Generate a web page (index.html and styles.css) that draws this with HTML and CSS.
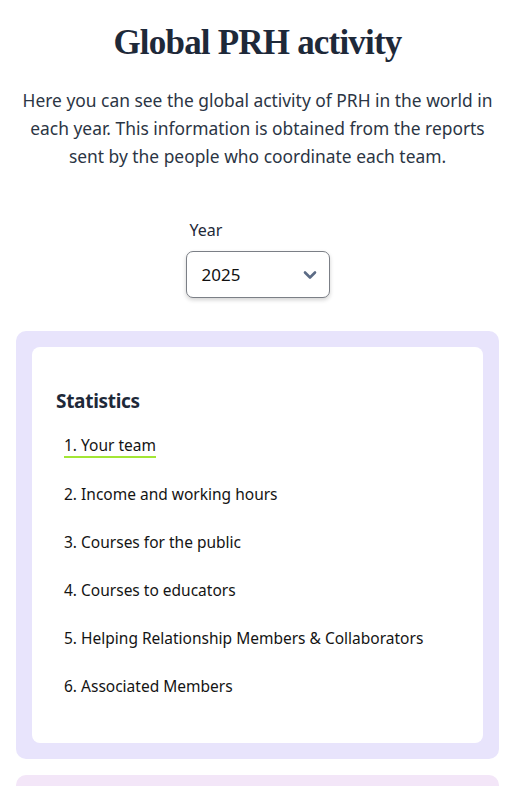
FILE: index.html
```
<!DOCTYPE html>
<html lang="en">
<head>
<meta charset="utf-8">
<link rel="stylesheet" href="styles.css">
</head>
<body>
<main class="page">
  <h1 class="title">Global PRH activity</h1>
  <p class="intro">Here you can see the global activity of PRH in the world in each year. This information is obtained from the reports sent by the people who coordinate each team.</p>
  <div class="year-field">
    <label class="year-label" for="year">Year</label>
    <div class="select">
      <span class="select-value">2025</span>
      <svg class="chevron" width="14" height="10" viewBox="0 0 14 10"><path d="M2 2.5 L7 7.5 L12 2.5" fill="none" stroke="#5b6b85" stroke-width="2.6" stroke-linecap="round" stroke-linejoin="round"/></svg>
    </div>
  </div>
  <section class="card card-purple">
    <div class="card-inner">
      <h2 class="card-title">Statistics</h2>
      <ol class="stat-list">
        <li><a class="stat-link active">1. Your team</a></li>
        <li><a class="stat-link">2. Income and working hours</a></li>
        <li><a class="stat-link">3. Courses for the public</a></li>
        <li><a class="stat-link">4. Courses to educators</a></li>
        <li><a class="stat-link">5. Helping Relationship Members &amp; Collaborators</a></li>
        <li><a class="stat-link">6. Associated Members</a></li>
      </ol>
    </div>
  </section>
  <section class="card card-pink"></section>
</main>
</body>
</html>
```
FILE: styles.css
```
* { box-sizing: border-box; }
html, body { margin: 0; padding: 0; background: #fff; }
body {
  font-family: "Noto Sans", "Open Sans", sans-serif;
  color: #1e2939;
  overflow: hidden;
}
.page {
  padding: 0 16px;
  display: flex;
  flex-direction: column;
  align-items: stretch;
}
.title {
  font-family: "Liberation Serif", "DejaVu Serif", serif;
  font-weight: 700;
  font-size: 35px;
  letter-spacing: -0.8px;
  line-height: 44px;
  text-align: center;
  margin: 21px 0 0;
  color: #1e2939;
}
.intro {
  margin: 21px 0 0;
  text-align: center;
  font-size: 17.4px;
  line-height: 28px;
  color: #2b3544;
  padding: 0;
}
.year-field {
  align-self: center;
  display: flex;
  flex-direction: column;
  margin-top: 48px;
}
.year-label {
  font-size: 16px;
  line-height: 24px;
  padding-left: 4px;
  margin-bottom: 9px;
  color: #1e2939;
}
.select {
  width: 144px;
  height: 47px;
  border: 1px solid #7b7f86;
  border-radius: 7px;
  box-shadow: 0 2px 4px rgba(0,0,0,0.18);
  display: flex;
  align-items: center;
  justify-content: space-between;
  padding: 0 12px 0 15px;
  background: #fff;
}
.select-value {
  font-size: 17px;
  color: #111;
}
.card {
  border-radius: 10px;
  padding: 16px;
}
.card-purple {
  background: #e8e4fc;
  margin-top: 33px;
}
.card-pink {
  background: #f3e6f8;
  margin-top: 16px;
  height: 60px;
}
.card-inner {
  background: #fff;
  border-radius: 8px;
  padding: 39px 24px 45px;
}
.card-title {
  margin: 0;
  font-size: 19px;
  letter-spacing: -0.3px;
  line-height: 30px;
  font-weight: 700;
  color: #1e2939;
}
.stat-list {
  list-style: none;
  margin: 17px 0 0;
  padding: 0 0 0 8px;
  display: flex;
  flex-direction: column;
  gap: 24px;
}
.stat-list li {
  font-size: 15.5px;
  line-height: 24px;
}
.stat-link {
  color: #141414;
  text-decoration: none;
  display: inline-block;
}
.stat-link.active {
  border-bottom: 2px solid #a3e635;
  line-height: 22px;
}
```
